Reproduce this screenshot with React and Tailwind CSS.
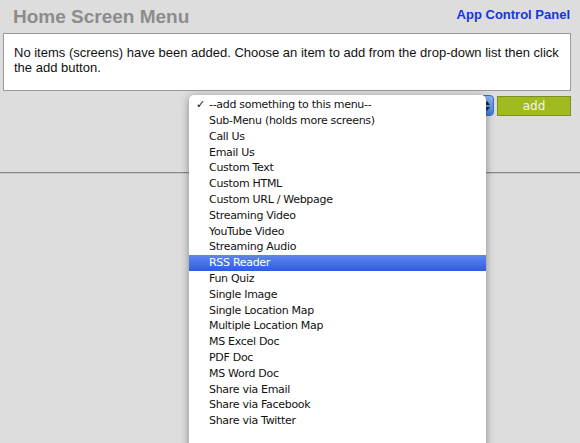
import React from "react";

const items = [
  "Sub-Menu (holds more screens)",
  "Call Us",
  "Email Us",
  "Custom Text",
  "Custom HTML",
  "Custom URL / Webpage",
  "Streaming Video",
  "YouTube Video",
  "Streaming Audio",
  "RSS Reader",
  "Fun Quiz",
  "Single Image",
  "Single Location Map",
  "Multiple Location Map",
  "MS Excel Doc",
  "PDF Doc",
  "MS Word Doc",
  "Share via Email",
  "Share via Facebook",
  "Share via Twitter",
];

export default function App() {
  return (
    <div className="relative w-[580px] h-[443px] overflow-hidden bg-[#dddddd] font-['Liberation_Sans',Arial,sans-serif]">
      <div className="flex items-start justify-between pl-[13px] pr-[10px] pt-[6px] h-[33px]">
        <h1 className="text-[19px] leading-[22px] font-bold text-[#8c8c8c]">Home Screen Menu</h1>
        <a className="text-[13px] leading-[16px] font-bold text-[#1433e6] mt-[1px]">App Control Panel</a>
      </div>
      <div className="mx-[3px] w-[568px] h-[58px] bg-white border border-[#9a9a9a] px-[10px] pt-[11px] text-[13px] leading-[15px] text-[#111]">
        No items (screens) have been added. Choose an item to add from the drop-down list then click the add button.
      </div>
      <div className="flex justify-end items-start pr-[9px] pt-[4px] h-[81px]">
        <div className="mr-[3px] w-[14px] h-[21px] rounded-[4px] bg-gradient-to-b from-[#8fb8f0] to-[#3f7fdc] border border-[#3a6cc0] flex flex-col items-center justify-center gap-[2px]">
          <span className="block w-0 h-0 border-l-[3px] border-r-[3px] border-b-[4px] border-l-transparent border-r-transparent border-b-[#1a2a4a]" />
          <span className="block w-0 h-0 border-l-[3px] border-r-[3px] border-t-[4px] border-l-transparent border-r-transparent border-t-[#1a2a4a]" />
        </div>
        <button className="mt-[1px] w-[74px] h-[20px] bg-[#9fbb1f] border border-[#7b8e22] text-[12px] leading-[18px] text-[#f4f6e4] font-['DejaVu_Sans',sans-serif]">
          add
        </button>
      </div>
      <div className="h-[1px] bg-[#8a8a8a]" />
      <div className="h-[1px] bg-[#c4c4c4]" />

      <div className="absolute left-[189px] top-[95px] w-[297px] h-[360px] bg-white rounded-t-[5px] shadow-[0_2px_9px_rgba(0,0,0,0.4)] pt-[2px] font-['DejaVu_Sans',sans-serif] text-[11px] tracking-[-0.3px] text-[#111]">
        <div className="flex items-center h-[16px] leading-[16px]">
          <span className="w-[20px] pl-[7px] text-[11px]">✓</span>
          <span>--add something to this menu--</span>
        </div>
        {items.map((t) =>
          t === "RSS Reader" ? (
            <div key={t} className="h-[15.8px] leading-[15.8px] pl-[20px] bg-gradient-to-b from-[#5f86f0] to-[#2c5de0] text-white">
              {t}
            </div>
          ) : (
            <div key={t} className="h-[15.8px] leading-[15.8px] pl-[20px]">
              {t}
            </div>
          )
        )}
      </div>
    </div>
  );
}
